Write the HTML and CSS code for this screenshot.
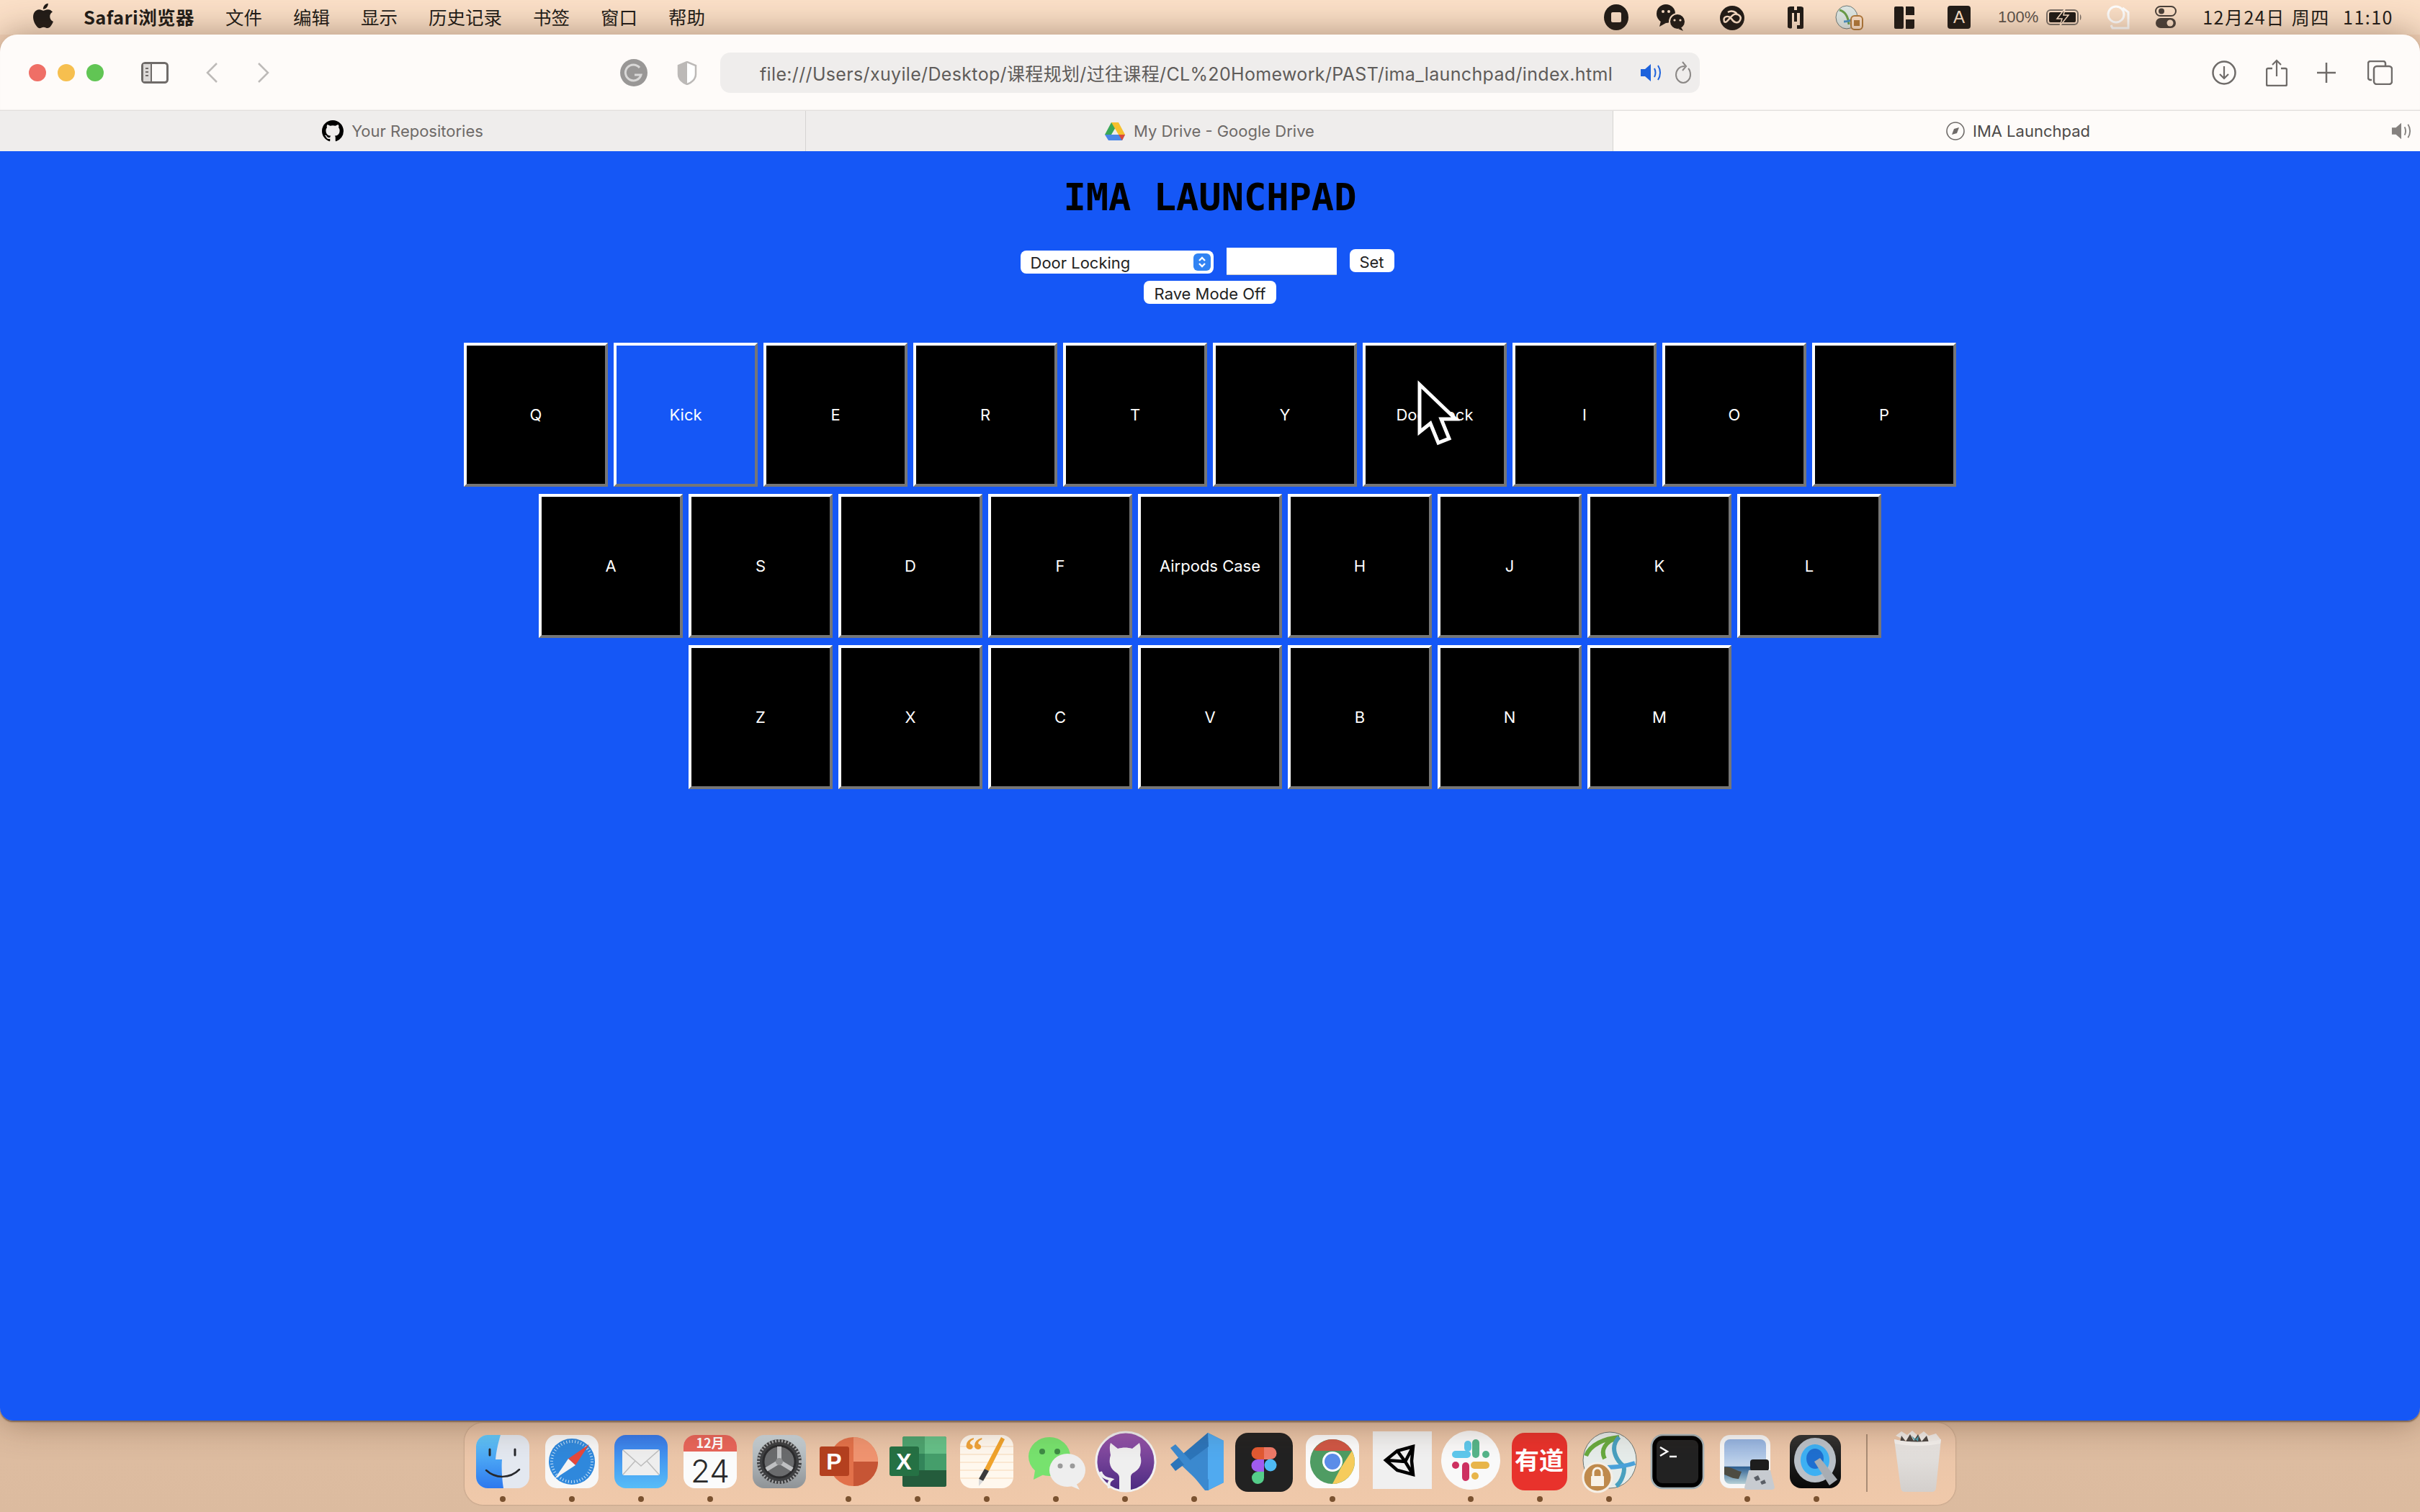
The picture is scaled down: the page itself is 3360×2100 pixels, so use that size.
FILE: index.html
```html
<!DOCTYPE html>
<html>
<head>
    <title>IMA Launchpad</title>
    <link rel="stylesheet" href="styles.css">
</head>
<body>
    <!-- menu bar -->
    <div class="menubar">
        <div class="menu-left">
            <svg class="apple" width="32" height="36" viewBox="3 1.5 18 21"><path fill="#211c18" d="M18.71 19.5c-.83 1.24-1.71 2.45-3.05 2.47-1.34.03-1.77-.79-3.29-.79-1.53 0-2 .77-3.27.82-1.31.05-2.3-1.32-3.14-2.53C4.25 17 2.94 12.45 4.7 9.39c.87-1.52 2.43-2.48 4.12-2.51 1.28-.02 2.5.87 3.29.87.78 0 2.26-1.07 3.81-.91.65.03 2.47.26 3.64 1.98-.09.06-2.17 1.28-2.15 3.81.03 3.02 2.65 4.03 2.68 4.04-.03.07-.42 1.44-1.38 2.83M13 3.5c.73-.83 1.94-1.46 2.94-1.5.13 1.17-.34 2.35-1.04 3.19-.69.85-1.83 1.51-2.95 1.42-.15-1.15.41-2.35 1.05-3.11z"/></svg>
            <span class="menu-app">Safari浏览器</span>
            <span>文件</span>
            <span>编辑</span>
            <span>显示</span>
            <span>历史记录</span>
            <span>书签</span>
            <span>窗口</span>
            <span>帮助</span>
        </div>
        <div class="menu-right">
            <svg width="76" height="48" viewBox="0 0 76 48"><ellipse cx="38" cy="24" rx="17" ry="18" fill="#211c18"/><rect x="31" y="17" width="14" height="14" rx="2" fill="#fbe0c8"/></svg>
            <svg width="76" height="48" viewBox="0 0 76 48"><ellipse cx="31" cy="19" rx="13" ry="13" fill="#211c18"/><path d="M24 29l-2 8 9-5z" fill="#211c18"/><ellipse cx="47" cy="30" rx="11" ry="11" fill="#211c18" stroke="#fbe0c8" stroke-width="2"/><path d="M52 38l3 5-7-3z" fill="#211c18"/><circle cx="27" cy="16" r="2" fill="#fbe0c8"/><circle cx="35" cy="16" r="2" fill="#fbe0c8"/><circle cx="43" cy="28" r="1.6" fill="#fbe0c8"/><circle cx="51" cy="28" r="1.6" fill="#fbe0c8"/></svg>
            <svg width="94" height="48" viewBox="0 0 94 48"><circle cx="47" cy="25" r="17" fill="#211c18"/><path d="M36 30c-3-8 7-9 10-4s9 8 12 2-5-11-10-7-9 12-12 9zM41 17c5-3 12-1 13 4" fill="none" stroke="#fbe0c8" stroke-width="2.5"/></svg>
            <svg width="82" height="48" viewBox="0 0 82 48"><path d="M30 12c0-3 3-3 6-3h3v5h4V9h3c3 0 6 0 6 3v26c0 2-2 2-4 2h-5v-5h4V18h-4v12h-4V18h-3v20c0 2-3 2-6 0z" fill="#211c18"/></svg>
            <svg width="68" height="48" viewBox="0 0 68 48"><ellipse cx="30" cy="24" rx="15" ry="16" fill="#dfe9e6" stroke="#6d7a78" stroke-width="1"/><path d="M20 14c8 2 12 8 13 20" fill="none" stroke="#6ba04a" stroke-width="3"/><path d="M26 30c6 0 12-2 18-6" fill="none" stroke="#4d96c8" stroke-width="3"/><rect x="36" y="22" width="16" height="19" rx="5" fill="#fbe0c8" stroke="#b37b3c" stroke-width="2"/><rect x="40" y="28" width="8" height="8" fill="#b37b3c"/></svg>
            <svg width="84" height="48" viewBox="0 0 84 48"><rect x="28" y="9" width="13" height="31" rx="2" fill="#211c18"/><path d="M44 9h10a2 2 0 0 1 2 2v10H44zM44 27h12v11a2 2 0 0 1-2 2H44z" fill="#211c18"/></svg>
            <svg width="68" height="48" viewBox="0 0 68 48"><rect x="18" y="8" width="32" height="32" rx="4" fill="#211c18"/><text x="34" y="32" class="status-letter" text-anchor="middle">A</text></svg>
            <span class="battery-text">100%</span>
            <svg class="battery" width="50" height="24" viewBox="0 0 50 24"><rect x="1" y="2" width="43" height="20" rx="5" fill="none" stroke="#7a6f67" stroke-width="2"/><rect x="4" y="5" width="37" height="14" rx="2" fill="#211c18"/><path d="M47 8c2 1 2 7 0 8z" fill="#7a6f67"/><path d="M26 0L15 14h7l-3 10 12-15h-7z" fill="#211c18" stroke="#fbe0c8" stroke-width="1.5"/></svg>
            <svg class="ghost" width="32" height="34" viewBox="0 0 32 34"><circle cx="13" cy="13" r="11" fill="none" stroke="#fff" stroke-width="3"/><path d="M22 4l8 6v22H8l-2-4" fill="none" stroke="#fff" stroke-width="3"/></svg>
            <svg class="controls-icon" width="30" height="32" viewBox="0 0 30 32"><rect x="1" y="1" width="28" height="13" rx="6.5" fill="none" stroke="#4b423b" stroke-width="2"/><circle cx="9" cy="7.5" r="4" fill="#4b423b"/><rect x="1" y="17" width="28" height="14" rx="7" fill="#4b423b"/><circle cx="21" cy="24" r="4.5" fill="#fbe0c8"/></svg>
            <span class="clock">12月24日 周四 &nbsp;11:10</span>
        </div>
    </div>

    <div class="window">
        <div class="toolbar">
            <div class="lights">
                <span class="light light-red"></span>
                <span class="light light-yellow"></span>
                <span class="light light-green"></span>
            </div>
            <svg class="sidebar-icon" width="38" height="30" viewBox="0 0 38 30"><rect x="1.5" y="1.5" width="35" height="27" rx="4" fill="none" stroke="#6f6b69" stroke-width="3"/><rect x="3" y="3" width="11" height="24" fill="#dcd9d7"/><path d="M14 2v26" stroke="#6f6b69" stroke-width="2"/><path d="M6 9h4M6 14h4M6 19h4" stroke="#6f6b69" stroke-width="2"/></svg>
            <svg class="nav-back" width="17" height="28" viewBox="0 0 17 28"><path d="M15 1L2 14l13 13" fill="none" stroke="#bdbab8" stroke-width="2.5"/></svg>
            <svg class="nav-forward" width="17" height="28" viewBox="0 0 17 28"><path d="M2 1l13 13L2 27" fill="none" stroke="#bdbab8" stroke-width="2.5"/></svg>
            <svg class="g-icon" width="38" height="38" viewBox="0 0 38 38"><circle cx="19" cy="19" r="19" fill="#999796"/><path d="M27 12a11 11 0 1 0 2 10h-9" fill="none" stroke="#d9d8d7" stroke-width="3"/></svg>
            <svg class="shield-icon" width="28" height="33" viewBox="0 0 28 33"><path d="M14 1l12 5v12c0 7-6 12-12 14C8 30 2 25 2 18V6z" fill="#fff" stroke="#bcb9b7" stroke-width="2.5"/><path d="M14 1L2 6v12c0 7 6 12 12 14z" fill="#bcb9b7"/></svg>
            <div class="urlbar">
                <span class="url">file:///Users/xuyile/Desktop/课程规划/过往课程/CL%20Homework/PAST/ima_launchpad/index.html</span>
                <svg class="url-sound" width="30" height="26" viewBox="0 0 30 26"><path d="M1 8h6l8-7v24l-8-7H1z" fill="#1d62dc"/><path d="M20 7c2 4 2 8 0 12M25 3c4 6 4 14 0 20" fill="none" stroke="#1d62dc" stroke-width="2"/></svg>
                <svg class="url-reload" width="24" height="32" viewBox="0 0 24 32"><path d="M14 7C6 7 2 13 2 19s5 11 10 11 10-5 10-11c0-4-1-7-3-9" fill="none" stroke="#8a8785" stroke-width="2"/><path d="M11 1l5 6-5 6" fill="none" stroke="#8a8785" stroke-width="2"/></svg>
            </div>
            <div class="tool-right">
                <svg width="34" height="34" viewBox="0 0 34 34"><circle cx="17" cy="17" r="15.5" fill="none" stroke="#6f6b69" stroke-width="2.5"/><path d="M17 8v17M11 19l6 6 6-6" fill="none" stroke="#6f6b69" stroke-width="2.2"/></svg>
                <svg width="30" height="38" viewBox="0 0 30 38"><path d="M9 13H3a2 2 0 0 0-2 2v20a2 2 0 0 0 2 2h24a2 2 0 0 0 2-2V15a2 2 0 0 0-2-2h-6" fill="none" stroke="#6f6b69" stroke-width="2.5"/><path d="M15 24V2M9 8l6-6 6 6" fill="none" stroke="#6f6b69" stroke-width="2.2"/></svg>
                <svg width="26" height="28" viewBox="0 0 26 28"><path d="M13 0v28M0 14h26" stroke="#6f6b69" stroke-width="2.5"/></svg>
                <svg class="tabs-icon" width="35" height="34" viewBox="0 0 35 34"><path d="M6 27H4a3 3 0 0 1-3-3V4a3 3 0 0 1 3-3h18a3 3 0 0 1 3 3v3" fill="none" stroke="#6f6b69" stroke-width="2.5"/><rect x="9" y="8" width="25" height="25" rx="4" fill="none" stroke="#6f6b69" stroke-width="2.5"/></svg>
            </div>
        </div>

        <div class="tabs">
            <div class="tab">
                <svg width="30" height="30" viewBox="0 0 16 16"><path fill="#000" d="M8 0C3.58 0 0 3.58 0 8c0 3.54 2.29 6.53 5.47 7.59.4.07.55-.17.55-.38 0-.19-.01-.82-.01-1.49-2.01.37-2.53-.49-2.69-.94-.09-.23-.48-.94-.82-1.13-.28-.15-.68-.52-.01-.53.63-.01 1.08.58 1.23.82.72 1.21 1.87.87 2.33.66.07-.52.28-.87.51-1.07-1.78-.2-3.64-.89-3.64-3.95 0-.87.31-1.59.82-2.15-.08-.2-.36-1.02.08-2.12 0 0 .67-.21 2.2.82.64-.18 1.32-.27 2-.27.68 0 1.36.09 2 .27 1.53-1.04 2.2-.82 2.2-.82.44 1.1.16 1.92.08 2.12.51.56.82 1.27.82 2.15 0 3.07-1.87 3.75-3.65 3.95.29.25.54.73.54 1.48 0 1.07-.01 1.93-.01 2.2 0 .21.15.46.55.38A8.013 8.013 0 0016 8c0-4.42-3.58-8-8-8z"/></svg>
                <span>Your Repositories</span>
            </div>
            <div class="tab">
                <svg width="30" height="27" viewBox="0 0 30 27"><path d="M10 1h10l-10 17H1z" fill="#3aa757"/><path d="M20 1l9 17H20L10 1z" fill="#f6c02e"/><path d="M1 18l5 8h19l4-8H10z" fill="#4a86e8"/><path d="M25 26l4-8h-9z" fill="#d94b3b"/></svg>
                <span>My Drive - Google Drive</span>
            </div>
            <div class="tab tab-active">
                <svg width="26" height="26" viewBox="0 0 26 26"><circle cx="13" cy="13" r="12" fill="none" stroke="#6f6b69" stroke-width="1.6"/><path d="M18 8l-3 8-7 2 3-8z" fill="#6f6b69"/></svg>
                <span>IMA Launchpad</span>
                <svg class="tab-sound" width="28" height="26" viewBox="0 0 30 26"><path d="M1 8h6l8-7v24l-8-7H1z" fill="#85817f"/><path d="M20 7c2 4 2 8 0 12M25 3c4 6 4 14 0 20" fill="none" stroke="#85817f" stroke-width="2"/></svg>
            </div>
        </div>

        <!-- the page itself -->
        <div class="page">
            <h1 class="title">IMA LAUNCHPAD</h1>
            <div class="controls">
                <div class="select-wrap">
                    <select class="sound-select">
                        <option>Door Locking</option>
                    </select>
                    <svg class="select-arrows" width="24" height="24" viewBox="0 0 24 24"><rect x="0" y="0" width="24" height="24" rx="6" fill="#3083f3"/><path d="M8 10l4-4 4 4M8 14l4 4 4-4" fill="none" stroke="#fff" stroke-width="2.4"/></svg>
                </div>
                <input class="key-input" type="text">
                <button class="small-btn">Set</button>
            </div>
            <div class="controls-second">
                <button class="small-btn rave-btn">Rave Mode Off</button>
            </div>
            <div class="keyboard">
                <div class="key-row">
                    <button class="key">Q</button>
                    <button class="key key-on">Kick</button>
                    <button class="key">E</button>
                    <button class="key">R</button>
                    <button class="key">T</button>
                    <button class="key">Y</button>
                    <button class="key">Door Lock
                        <svg class="cursor" width="60" height="96" viewBox="0 0 60 96"><path d="M3 7v66l15-12 11 27 15-6-11-27h20z" fill="#000" stroke="#fff" stroke-width="5"/></svg>
                    </button>
                    <button class="key">I</button>
                    <button class="key">O</button>
                    <button class="key">P</button>
                </div>
                <div class="key-row">
                    <button class="key">A</button>
                    <button class="key">S</button>
                    <button class="key">D</button>
                    <button class="key">F</button>
                    <button class="key">Airpods Case</button>
                    <button class="key">H</button>
                    <button class="key">J</button>
                    <button class="key">K</button>
                    <button class="key">L</button>
                </div>
                <div class="key-row">
                    <button class="key">Z</button>
                    <button class="key">X</button>
                    <button class="key">C</button>
                    <button class="key">V</button>
                    <button class="key">B</button>
                    <button class="key">N</button>
                    <button class="key">M</button>
                </div>
            </div>
        </div>
    </div>

    <!-- dock -->
    <div class="dock">
        <div class="dock-item">
            <svg width="96" height="96" viewBox="0 0 96 96"><defs><linearGradient id="fd" x1="0" y1="0" x2="0" y2="1"><stop offset="0" stop-color="#62c9fa"/><stop offset="1" stop-color="#2d78ee"/></linearGradient></defs><rect x="11" y="11" width="74" height="74" rx="16" fill="#e3e8f0"/><path d="M27 11h18c-4 13-6 24-7 34h9c-1 13 0 27 2 40H27a16 16 0 0 1-16-16V27a16 16 0 0 1 16-16z" fill="url(#fd)"/><path d="M30 31v8M65 31v8" stroke="#26282c" stroke-width="3" stroke-linecap="round"/><path d="M25 60c13 12 33 12 46-1" fill="none" stroke="#26282c" stroke-width="2.5" stroke-linecap="round"/></svg>
            <span class="dot"></span>
        </div>
        <div class="dock-item">
            <svg width="96" height="96" viewBox="0 0 96 96"><rect x="11" y="11" width="74" height="74" rx="16" fill="#f7f7f7"/><circle cx="48" cy="48" r="32" fill="#2f88dc"/><circle cx="48" cy="48" r="28" fill="none" stroke="#cfe6f8" stroke-width="4" stroke-dasharray="1 3"/><path d="M72 24L43 44l10 9z" fill="#e5483c"/><path d="M24 72l19-28 10 9z" fill="#f4f4f4"/></svg>
            <span class="dot"></span>
        </div>
        <div class="dock-item">
            <svg width="96" height="96" viewBox="0 0 96 96"><defs><linearGradient id="ml" x1="0" y1="0" x2="0" y2="1"><stop offset="0" stop-color="#3578ea"/><stop offset="1" stop-color="#57bdf8"/></linearGradient></defs><rect x="11" y="11" width="74" height="74" rx="16" fill="url(#ml)"/><rect x="22" y="31" width="52" height="36" rx="3" fill="#eeeeee"/><path d="M23 32l25 22 25-22M23 66l17-19M73 66L56 47" fill="none" stroke="#bdbdbd" stroke-width="1.5"/></svg>
            <span class="dot"></span>
        </div>
        <div class="dock-item">
            <svg width="96" height="96" viewBox="0 0 96 96"><rect x="11" y="11" width="74" height="74" rx="16" fill="#fbfbfb"/><path d="M11 34V27a16 16 0 0 1 16-16h42a16 16 0 0 1 16 16v7z" fill="#e8655a"/><text x="48" y="29" class="cal-month" text-anchor="middle">12月</text><text x="48" y="77" class="cal-day" text-anchor="middle">24</text></svg>
            <span class="dot"></span>
        </div>
        <div class="dock-item">
            <svg width="96" height="96" viewBox="0 0 96 96"><defs><linearGradient id="pf" x1="0" y1="0" x2="0" y2="1"><stop offset="0" stop-color="#ccd6db"/><stop offset="1" stop-color="#8f9396"/></linearGradient></defs><rect x="11" y="11" width="74" height="74" rx="16" fill="url(#pf)"/><circle cx="48" cy="48" r="31" fill="#3e3f41"/><circle cx="48" cy="48" r="29" fill="none" stroke="#a9aaac" stroke-width="4" stroke-dasharray="2 2.5"/><circle cx="48" cy="48" r="22" fill="#6a6b6d" stroke="#2b2b2d" stroke-width="3"/><path d="M48 48V27M48 48L30 59M48 48l18 11" stroke="#bfc0c2" stroke-width="6"/><circle cx="48" cy="48" r="5" fill="#8c8d8f"/></svg>
            <span class="dot dot-none"></span>
        </div>
        <div class="dock-item">
            <svg width="96" height="96" viewBox="0 0 96 96"><circle cx="55" cy="48" r="34" fill="#e2714a"/><path d="M55 14a34 34 0 0 1 34 34H55z" fill="#f09470"/><path d="M55 48h34a34 34 0 0 1-34 34z" fill="#c65535"/><rect x="8" y="27" width="41" height="41" rx="3" fill="#b4401f"/><text x="28" y="59" class="tile-letter" text-anchor="middle">P</text></svg>
            <span class="dot"></span>
        </div>
        <div class="dock-item">
            <svg width="96" height="96" viewBox="0 0 96 96"><rect x="27" y="13" width="61" height="70" rx="3" fill="#33855a"/><path d="M27 16a3 3 0 0 1 3-3h28v24H27z" fill="#4ca36f"/><path d="M58 13h27a3 3 0 0 1 3 3v21H58z" fill="#65c088"/><rect x="58" y="37" width="30" height="23" fill="#459e6b"/><path d="M27 60h61v20a3 3 0 0 1-3 3H30a3 3 0 0 1-3-3z" fill="#245c3c"/><rect x="9" y="27" width="41" height="41" rx="3" fill="#257144"/><text x="29" y="59" class="tile-letter" text-anchor="middle">X</text></svg>
            <span class="dot"></span>
        </div>
        <div class="dock-item">
            <svg width="96" height="96" viewBox="0 0 96 96"><rect x="11" y="11" width="74" height="74" rx="16" fill="#fff8ee"/><path d="M11 27h74M11 38h74M11 49h74M11 60h74M11 71h74" stroke="#fbe8d2" stroke-width="2"/><text x="17" y="50" class="quote">“</text><path d="M68 14l5 3-22 44-6-3z" fill="#f0a32c"/><path d="M45 58l6 3-8 14-6-3z" fill="#3b3b3b"/><path d="M37 72l6 3-6 7z" fill="#d7d7d7"/></svg>
            <span class="dot"></span>
        </div>
        <div class="dock-item">
            <svg width="96" height="96" viewBox="0 0 96 96"><ellipse cx="39" cy="41" rx="29" ry="27" fill="#77e26e"/><path d="M19 60l-2 13 14-7z" fill="#77e26e"/><circle cx="29" cy="34" r="4" fill="#3e8a45"/><circle cx="50" cy="34" r="4" fill="#3e8a45"/><ellipse cx="64" cy="60" rx="25" ry="23" fill="#eeeeee"/><path d="M76 78l5 9-12-5z" fill="#eeeeee"/><circle cx="54" cy="54" r="3.5" fill="#9a9a9a"/><circle cx="71" cy="54" r="3.5" fill="#9a9a9a"/></svg>
            <span class="dot"></span>
        </div>
        <div class="dock-item">
            <svg width="96" height="96" viewBox="0 0 96 96"><defs><linearGradient id="gh" x1="0" y1="0" x2="0" y2="1"><stop offset="0" stop-color="#9a57ad"/><stop offset="1" stop-color="#4a2a80"/></linearGradient></defs><circle cx="49" cy="48" r="41" fill="url(#gh)" stroke="#f2f2f2" stroke-width="3"/><path d="M28 22l10 8c7-2 13-2 20 0l10-8c2 6 2 12 1 17 3 9 1 18-7 23-3 2-6 3-6 8v18H40V70c0-4-3-6-6-8-7-5-9-14-6-23-1-6-2-11 0-17z" fill="#efefef"/><path d="M14 62c2 8 8 9 15 11-4 3-4 6-3 12" fill="none" stroke="#efefef" stroke-width="4"/></svg>
            <span class="dot"></span>
        </div>
        <div class="dock-item">
            <svg width="96" height="96" viewBox="0 0 96 96"><path d="M67 8L89 19v58L67 88 24 47z" fill="#3b89cf"/><path d="M67 8L89 19v58L67 88z" fill="#50aaf0"/><path d="M67 8L15 52l7 9L68 27z" fill="#2c75ba"/><path d="M15 29l7-5 46 49v15l-5 0z" fill="#3b89cf"/></svg>
            <span class="dot"></span>
        </div>
        <div class="dock-item">
            <svg width="96" height="96" viewBox="0 0 96 96"><rect x="9" y="8" width="80" height="82" rx="18" fill="#222"/><path d="M49 28H40a8.500 8.500 0 0 0 0 17h9z" fill="#e25a32"/><path d="M49 28h9a8.500 8.500 0 0 1 0 17h-9z" fill="#ee7a68"/><path d="M49 45H40a8.500 8.500 0 0 0 0 17h9z" fill="#a05cf0"/><ellipse cx="58" cy="53" rx="8.500" ry="8.500" fill="#4ebbf5"/><path d="M49 62H40a8.500 8.500 0 1 0 9 8.500z" fill="#55cd8a"/></svg>
            <span class="dot dot-none"></span>
        </div>
        <div class="dock-item">
            <svg width="96" height="96" viewBox="0 0 96 96"><rect x="11" y="11" width="74" height="74" rx="16" fill="#fbfbfb"/><circle cx="48" cy="48" r="31" fill="#4f9c63"/><path d="M48 17a31 31 0 0 1 27 16H48l-22 0-4-1A31 31 0 0 1 48 17z" fill="#cf5745"/><path d="M75 33a31 31 0 0 1-27 46l12-23z" fill="#f6cc5c"/><circle cx="48" cy="48" r="14" fill="#fff"/><circle cx="48" cy="48" r="11" fill="#5c8de8"/></svg>
            <span class="dot"></span>
        </div>
        <div class="dock-item">
            <svg width="96" height="96" viewBox="0 0 96 96"><rect x="8" y="6" width="82" height="80" fill="#f0f0f0"/><path d="M64 27L42 33 26 46l16 14 22 6-2-19z M42 33l11 15 11-21M53 48l-27-2M53 48l11 18" fill="none" stroke="#000" stroke-width="4.500"/></svg>
            <span class="dot dot-none"></span>
        </div>
        <div class="dock-item">
            <svg width="96" height="96" viewBox="0 0 96 96"><circle cx="48" cy="46" r="41" fill="#f9f9f9"/><path d="M43 38H27" stroke="#5ec8ec" stroke-width="10" stroke-linecap="round"/><path d="M44 24v5" stroke="#5ec8ec" stroke-width="10" stroke-linecap="round"/><path d="M55 22v16" stroke="#56b58a" stroke-width="10" stroke-linecap="round"/><path d="M69 38h0" stroke="#56b58a" stroke-width="10" stroke-linecap="round"/><path d="M53 53h16" stroke="#e8b54a" stroke-width="10" stroke-linecap="round"/><path d="M54 68h0" stroke="#e8b54a" stroke-width="10" stroke-linecap="round"/><path d="M41 54v16" stroke="#cd3060" stroke-width="10" stroke-linecap="round"/><path d="M27 53h0" stroke="#cd3060" stroke-width="10" stroke-linecap="round"/></svg>
            <span class="dot"></span>
        </div>
        <div class="dock-item">
            <svg width="96" height="96" viewBox="0 0 96 96"><rect x="9" y="8" width="77" height="80" rx="18" fill="#e8322c"/><text x="47" y="59" class="youdao" text-anchor="middle">有道</text></svg>
            <span class="dot"></span>
        </div>
        <div class="dock-item">
            <svg width="96" height="96" viewBox="0 0 96 96"><ellipse cx="49" cy="46" rx="37" ry="39" fill="#e6ecea" stroke="#6b7673" stroke-width="1"/><path d="M16 40c6-16 26-24 46-26-20 6-26 18-20 30" fill="none" stroke="#68a93f" stroke-width="6"/><path d="M62 14c-14 14-4 32 6 40 3 6-2 22-10 28" fill="none" stroke="#49a0bf" stroke-width="6"/><path d="M46 56c14 0 26-2 38-6" fill="none" stroke="#4aa1d9" stroke-width="6"/><circle cx="32" cy="70" r="20" fill="#bf8a4c" stroke="#f5efe6" stroke-width="3"/><rect x="23" y="68" width="18" height="14" rx="1" fill="#f8f2e8"/><path d="M26 68v-5a6 6 0 0 1 12 0v5" fill="none" stroke="#f8f2e8" stroke-width="3"/></svg>
            <span class="dot"></span>
        </div>
        <div class="dock-item">
            <svg width="96" height="96" viewBox="0 0 96 96"><rect x="11" y="11" width="72" height="74" rx="16" fill="#000" stroke="#a6b3b7" stroke-width="2.500"/><rect x="18" y="18" width="58" height="60" rx="8" fill="#222"/><path d="M23 28l10 6-10 6" fill="none" stroke="#fff" stroke-width="2.500"/><path d="M36 41h10" stroke="#fff" stroke-width="2.500"/></svg>
            <span class="dot dot-none"></span>
        </div>
        <div class="dock-item">
            <svg width="96" height="96" viewBox="0 0 96 96"><defs><linearGradient id="pv" x1="0" y1="0" x2="0" y2="1"><stop offset="0" stop-color="#92b2e0"/><stop offset=".6" stop-color="#c2d4ea"/><stop offset=".62" stop-color="#2d5f92"/><stop offset="1" stop-color="#b5cfd5"/></linearGradient></defs><rect x="10" y="11" width="70" height="74" rx="14" fill="#f6f6f6"/><rect x="16" y="17" width="58" height="62" rx="8" fill="url(#pv)"/><path d="M16 56c8-2 14 4 24 6l-4 10c-8 0-14-4-20-6z" fill="#4d4c42"/><rect x="52" y="45" width="26" height="16" rx="4" fill="#1d1d1d"/><path d="M50 60h30l6 24a4 4 0 0 1-4 3H48a4 4 0 0 1-4-3z" fill="#c7cbd0"/><path d="M57 70l6-3 3 6-6 2zM66 76l6-3 2 5-6 2z" fill="#5a5f66"/></svg>
            <span class="dot"></span>
        </div>
        <div class="dock-item">
            <svg width="96" height="96" viewBox="0 0 96 96"><defs><linearGradient id="qt" x1="0" y1="0" x2="0" y2="1"><stop offset="0" stop-color="#333"/><stop offset="1" stop-color="#080808"/></linearGradient></defs><rect x="11" y="11" width="71" height="74" rx="16" fill="url(#qt)"/><ellipse cx="46" cy="46" rx="29" ry="31" fill="#b9c0c8"/><ellipse cx="46" cy="46" rx="20" ry="22" fill="#3db0f3"/><ellipse cx="46" cy="44" rx="12" ry="14" fill="#1f6fd0"/><path d="M45 48l8-5 24 30-11 8z" fill="#a8adb3"/></svg>
            <span class="dot"></span>
        </div>
        <div class="dock-sep"></div>
        <div class="dock-item">
            <svg width="96" height="96" viewBox="0 0 96 96"><defs><linearGradient id="tr" x1="0" y1="0" x2="0" y2="1"><stop offset="0" stop-color="#e9e6e3"/><stop offset="1" stop-color="#d3cfcc"/></linearGradient></defs><path d="M18 12l8-6 8 5 7-6 8 7 8-6 7 6 10-3 7 9-32 8z" fill="#f0ece8"/><path d="M26 12l6 8 6-10 5 9 6-9 5 10 7-8 3 9H24z" fill="#4c4743"/><path d="M40 12l4 7 6-7-1 8z" fill="#4b9fb0"/><path d="M16 17c20 5 44 5 65 0l-7 68c-1 4-3 5-6 5H31c-3 0-5-1-6-5z" fill="url(#tr)"/><path d="M16 17c20 5 44 5 65 0l-1 6c-20 4-43 4-63 0z" fill="#f4f1ee"/></svg>
            <span class="dot dot-none"></span>
        </div>
    </div>
</body>
</html>
```

FILE: styles.css
```css
html, body {
    margin: 0;
    padding: 0;
}
body {
    width: 3360px;
    height: 2100px;
    overflow: hidden;
    display: flex;
    flex-direction: column;
    font-family: Inter, "Noto Sans CJK SC", sans-serif;
    background: linear-gradient(180deg, #f6d6bc 0%, #dcbb9f 100%);
}

/* menu bar */
.menubar {
    height: 48px;
    flex: none;
    display: flex;
    justify-content: space-between;
    align-items: center;
    padding: 0 37px 0 44px;
    background: #fbe0c8;
    color: #211c18;
    font-family: "Noto Sans CJK SC", sans-serif;
    font-size: 25.5px;
}
.menu-left {
    display: flex;
    align-items: center;
    gap: 43px;
    margin-top: -3px;
}
.apple {
    margin-right: -3px;
    margin-top: -1px;
}
.menu-app {
    font-weight: 700;
    letter-spacing: 0.4px;
}
.menu-right {
    display: flex;
    align-items: center;
}
.status-letter {
    font-family: "Liberation Sans", sans-serif;
    font-size: 24px;
    fill: #fbe0c8;
}
.battery-text {
    margin-left: 20px;
    font-family: "Liberation Sans", sans-serif;
    font-size: 22px;
    color: #5d534c;
}
.battery {
    margin-left: 11px;
}
.ghost {
    margin-left: 34px;
}
.controls-icon {
    margin-left: 35px;
}
.clock {
    margin-left: 36px;
    margin-top: -3px;
    font-size: 25px;
    letter-spacing: 1.5px;
    word-spacing: 2px;
}

/* browser window */
.window {
    flex: 1;
    display: flex;
    flex-direction: column;
    border-radius: 24px 24px 18px 18px;
    overflow: hidden;
    box-shadow: 0 2px 2px #7d6350, 0 0 50px rgba(70, 40, 20, 0.45);
    z-index: 1;
}
.toolbar {
    height: 106px;
    flex: none;
    display: flex;
    align-items: center;
    padding-left: 40px;
    background: #fefbf9;
    box-shadow: inset 0 -2px 2px -1px #d8d5d3;
}
.lights {
    display: flex;
    gap: 16px;
}
.light {
    width: 24px;
    height: 24px;
    border-radius: 50%;
}
.light-red { background: #ef6f66; }
.light-yellow { background: #f6bf4f; }
.light-green { background: #61c554; }
.sidebar-icon { margin-left: 52px; }
.nav-back { margin-left: 52px; }
.nav-forward { margin-left: 54px; }
.g-icon { margin-left: 487px; }
.shield-icon { margin-left: 41px; }
.urlbar {
    width: 1360px;
    height: 56px;
    margin-left: 32px;
    display: flex;
    align-items: center;
    background: #efedec;
    border-radius: 14px;
    padding-left: 55px;
    box-sizing: border-box;
}
.url {
    width: 1222px;
    flex: none;
    font-size: 25px;
    letter-spacing: 0.34px;
    color: #5f5c5a;
    white-space: nowrap;
}
.url-reload {
    margin-left: 18px;
}
.tool-right {
    margin-left: 711px;
    display: flex;
    align-items: center;
    gap: 41px;
}
.tabs-icon {
    margin-left: 3px;
}

/* tabs */
.tabs {
    height: 56px;
    flex: none;
    display: grid;
    grid-template-columns: 1119px 1121px 1120px;
}
.tab {
    display: flex;
    align-items: center;
    justify-content: center;
    gap: 11px;
    background: #efedec;
    border-right: 1px solid #d6d4d2;
    font-size: 22px;
    color: #6e6a68;
}
.tab-active {
    position: relative;
    padding-left: 4px;
    background: #fefbf9;
    border-right: none;
    color: #4d4a48;
}
.tab-sound {
    position: absolute;
    right: 12px;
    top: 15px;
}

/* launchpad page */
.page {
    flex: 1;
    background: #1557f6;
}
.title {
    margin: 0;
    padding-top: 34px;
    height: 100px;
    text-align: center;
    font-family: "DejaVu Sans Mono", monospace;
    font-size: 52px;
    line-height: 60px;
    font-weight: 700;
    color: #000;
}
.controls {
    display: flex;
    justify-content: center;
    align-items: center;
    gap: 18px;
    padding-right: 8px;
    height: 38px;
}
.select-wrap {
    position: relative;
    width: 268px;
    height: 32px;
    margin-top: 2px;
}
.sound-select {
    appearance: none;
    display: block;
    width: 100%;
    height: 100%;
    border: none;
    border-radius: 8px;
    padding: 1px 14px 0;
    background: #fff;
    color: #222;
    font-family: Inter, sans-serif;
    font-size: 22px;
}
.select-arrows {
    position: absolute;
    right: 4px;
    top: 4px;
}
.key-input {
    width: 153px;
    height: 38px;
    box-sizing: border-box;
    border: none;
    border-bottom: 1px solid #c9c9c9;
    background: #fff;
}
.small-btn {
    height: 32px;
    width: 62px;
    border: none;
    border-radius: 8px;
    background: #fff;
    color: #222;
    font-family: Inter, sans-serif;
    font-size: 22px;
    padding: 3px 0 0;
    margin-top: -2px;
}
.controls-second {
    display: flex;
    justify-content: center;
    margin-top: 8px;
}
.rave-btn {
    width: 184px;
    margin-top: 0;
}
.keyboard {
    margin-top: 54px;
    display: flex;
    flex-direction: column;
    gap: 10px;
}
.key-row {
    display: flex;
    justify-content: center;
    gap: 8px;
}
.key {
    position: relative;
    width: 200px;
    height: 200px;
    padding: 0;
    box-sizing: border-box;
    border-width: 4px;
    border-style: solid;
    border-color: #fff #767676 #767676 #fff;
    background: #000;
    color: #fff;
    font-family: Inter, sans-serif;
    font-size: 22px;
}
.key-on {
    background: #1557f6;
}
.cursor {
    position: absolute;
    left: 72px;
    top: 47px;
}

/* dock */
.dock {
    flex: none;
    align-self: center;
    width: 2070px;
    height: 114px;
    margin: 3px 0 10px;
    box-sizing: border-box;
    padding: 6px 5px 0;
    display: flex;
    background: linear-gradient(180deg, #e8c4a8, #f0c9aa);
    border-radius: 26px;
    box-shadow: 0 0 2px rgba(90, 60, 40, 0.5);
}
.dock-item {
    width: 96px;
    height: 104px;
    display: flex;
    flex-direction: column;
    align-items: center;
}
.dock-item svg {
    display: block;
    flex: none;
}
.dot {
    width: 8px;
    height: 8px;
    border-radius: 50%;
    background: #7a5230;
}
.dot-none {
    visibility: hidden;
}
.dock-sep {
    width: 44px;
    display: flex;
    justify-content: center;
}
.dock-sep::before {
    content: "";
    width: 2px;
    height: 80px;
    margin-top: 10px;
    background: #a98c75;
}
.cal-month {
    font-family: "Noto Sans CJK SC", sans-serif;
    font-size: 18px;
    font-weight: 700;
    fill: #fff;
}
.cal-day {
    font-family: Inter, sans-serif;
    font-size: 44px;
    font-weight: 300;
    fill: #2a2a2a;
}
.tile-letter {
    font-family: "Liberation Sans", sans-serif;
    font-size: 32px;
    font-weight: 700;
    fill: #fff;
}
.quote {
    font-family: "Liberation Serif", serif;
    font-size: 52px;
    font-weight: 700;
    fill: #eea33a;
}
.youdao {
    font-family: "Noto Sans CJK SC", sans-serif;
    font-size: 34px;
    font-weight: 700;
    fill: #fff;
}
```
